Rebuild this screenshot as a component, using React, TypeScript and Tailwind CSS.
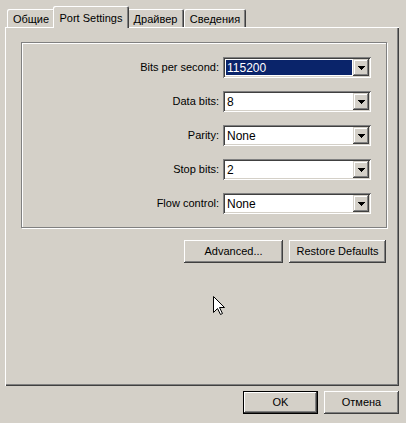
import React from "react";

const raised =
  "shadow-[inset_-1px_-1px_0_#404040,inset_1px_1px_0_#ffffff,inset_-2px_-2px_0_#808080,inset_2px_2px_0_#d4d0c8]";
const sunken =
  "shadow-[inset_1px_1px_0_#808080,inset_-1px_-1px_0_#ffffff,inset_2px_2px_0_#404040,inset_-2px_-2px_0_#d4d0c8]";

const rows = [
  { label: "Bits per second:", value: "115200", focused: true },
  { label: "Data bits:", value: "8" },
  { label: "Parity:", value: "None" },
  { label: "Stop bits:", value: "2" },
  { label: "Flow control:", value: "None" },
];

function Arrow() {
  return (
    <svg width="7" height="4" viewBox="0 0 7 4" className="block">
      <path d="M0 0h7v1H0zM1 1h5v1H1zM2 2h3v1H2zM3 3h1v1H3z" fill="#000" />
    </svg>
  );
}

function Combo({ value, focused }: { value: string; focused?: boolean }) {
  return (
    <div className={`w-[148px] h-[21px] bg-white p-[2px] flex ${sunken}`}>
      <div className="flex-1 flex items-center p-[1px]">
        <div
          className={`h-full w-full flex items-center pl-[1px] text-[12px] ${
            focused ? "bg-[#0a246a] text-white" : "text-black"
          }`}
        >
          {value}
        </div>
      </div>
      <div className="w-[16px] h-[17px] bg-[#d4d0c8] flex items-center justify-center shadow-[inset_-1px_-1px_0_#404040,inset_1px_1px_0_#d4d0c8,inset_-2px_-2px_0_#808080,inset_2px_2px_0_#ffffff]">
        <Arrow />
      </div>
    </div>
  );
}

function Tab({ label, active, w }: { label: string; active?: boolean; w: string }) {
  if (active) {
    return (
      <div
        className={`relative z-10 ${w} h-[22px] -mb-[1px] -mx-[2px] bg-[#d4d0c8] rounded-t-[2px] flex justify-center pt-[4px] shadow-[inset_1px_1px_0_#ffffff,inset_-1px_0_0_#404040,inset_-2px_0_0_#808080]`}
      >
        {label}
      </div>
    );
  }
  return (
    <div
      className={`${w} h-[18px] bg-[#d4d0c8] rounded-t-[2px] flex justify-center pt-[2px] shadow-[inset_1px_1px_0_#ffffff,inset_-1px_0_0_#404040,inset_-2px_0_0_#808080]`}
    >
      {label}
    </div>
  );
}

export default function App() {
  return (
    <div
      className="relative w-[406px] h-[423px] bg-[#d4d0c8] text-[11px] text-black pt-[6px] select-none"
      style={{ fontFamily: '"Liberation Sans", Arial, sans-serif' }}
    >
      {/* Tabs */}
      <div className="flex items-end h-[21px] pl-[7px]">
        <Tab label="Общие" w="w-[48px]" />
        <Tab label="Port Settings" w="w-[76px]" active />
        <Tab label="Драйвер" w="w-[57px]" />
        <Tab label="Сведения" w="w-[62px]" />
      </div>

      {/* Panel */}
      <div className="ml-[5px] w-[394px] h-[359px] pt-[15px] shadow-[inset_1px_1px_0_#ffffff,inset_-1px_-1px_0_#404040,inset_-2px_-2px_0_#808080]">
        <div className="ml-[16px] w-[366px] h-[186px] border border-[#808080] shadow-[inset_1px_1px_0_#ffffff,1px_1px_0_#ffffff] pt-[14px] pr-[15px] flex flex-col gap-[13px]">
          {rows.map((r) => (
            <div key={r.label} className="flex items-center justify-end gap-[4px]">
              <span>{r.label}</span>
              <Combo value={r.value} focused={r.focused} />
            </div>
          ))}
        </div>

        <div className="ml-[16px] w-[366px] mt-[12px] flex justify-end gap-[6px] pr-[1px]">
          <button className={`w-[99px] h-[23px] bg-[#d4d0c8] ${raised}`}>Advanced...</button>
          <button className={`w-[97px] h-[23px] bg-[#d4d0c8] ${raised}`}>Restore Defaults</button>
        </div>
      </div>

      {/* Dialog buttons */}
      <div className="ml-[5px] w-[394px] mt-[5px] flex justify-end gap-[6px]">
        <button className="w-[75px] h-[23px] border border-black bg-[#d4d0c8]">
          <div className={`w-full h-full flex items-center justify-center ${raised}`}>OK</div>
        </button>
        <button className={`w-[75px] h-[23px] bg-[#d4d0c8] ${raised}`}>Отмена</button>
      </div>

      {/* Mouse cursor */}
      <svg width="13" height="20" viewBox="0 0 13 20" className="absolute left-[213px] top-[296px]">
        <path
          d="M0.5 0.5 L0.5 16.5 L4.5 12.5 L7.5 18.5 L9.5 17.5 L6.5 11.5 L11.5 11.5 Z"
          fill="#ffffff"
          stroke="#000000"
          strokeWidth="1"
        />
      </svg>
    </div>
  );
}
